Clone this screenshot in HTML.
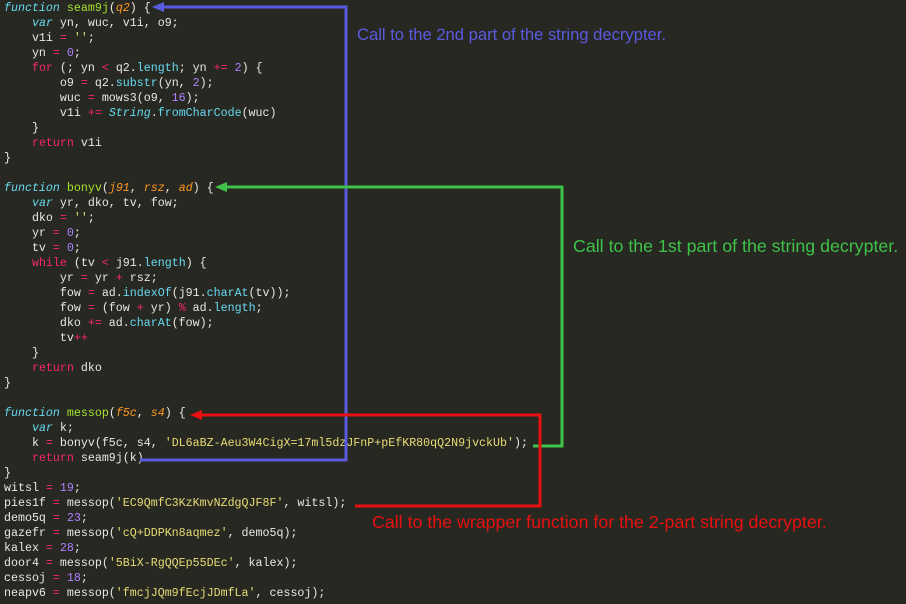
<!DOCTYPE html>
<html><head><meta charset="utf-8"><style>
html,body{margin:0;padding:0;background:#272822;width:906px;height:604px;overflow:hidden}
#code{position:absolute;left:4px;top:1px;font-family:"Liberation Mono",monospace;font-size:11.65px;line-height:15px;color:#e8e8e2;white-space:pre}
.k{color:#66d9ef;font-style:italic}
.f{color:#a6e22e}
.p{color:#fd971f;font-style:italic}
.o{color:#f92672}
.n{color:#ae81ff}
.s{color:#e6db74}
.m{color:#66d9ef}
.lbl{position:absolute;font-family:"Liberation Sans",Arial,sans-serif;font-size:17.8px;white-space:nowrap}
</style></head><body>
<div id="code"><span class="k">function</span> <span class="f">seam9j</span>(<span class="p">q2</span>) {
    <span class="k">var</span> yn, wuc, v1i, o9;
    v1i <span class="o">=</span> <span class="s">''</span>;
    yn <span class="o">=</span> <span class="n">0</span>;
    <span class="o">for</span> (; yn <span class="o">&lt;</span> q2.<span class="m">length</span>; yn <span class="o">+=</span> <span class="n">2</span>) {
        o9 <span class="o">=</span> q2.<span class="m">substr</span>(yn, <span class="n">2</span>);
        wuc <span class="o">=</span> mows3(o9, <span class="n">16</span>);
        v1i <span class="o">+=</span> <span class="k">String</span>.<span class="m">fromCharCode</span>(wuc)
    }
    <span class="o">return</span> v1i
}

<span class="k">function</span> <span class="f">bonyv</span>(<span class="p">j91</span>, <span class="p">rsz</span>, <span class="p">ad</span>) {
    <span class="k">var</span> yr, dko, tv, fow;
    dko <span class="o">=</span> <span class="s">''</span>;
    yr <span class="o">=</span> <span class="n">0</span>;
    tv <span class="o">=</span> <span class="n">0</span>;
    <span class="o">while</span> (tv <span class="o">&lt;</span> j91.<span class="m">length</span>) {
        yr <span class="o">=</span> yr <span class="o">+</span> rsz;
        fow <span class="o">=</span> ad.<span class="m">indexOf</span>(j91.<span class="m">charAt</span>(tv));
        fow <span class="o">=</span> (fow <span class="o">+</span> yr) <span class="o">%</span> ad.<span class="m">length</span>;
        dko <span class="o">+=</span> ad.<span class="m">charAt</span>(fow);
        tv<span class="o">++</span>
    }
    <span class="o">return</span> dko
}

<span class="k">function</span> <span class="f">messop</span>(<span class="p">f5c</span>, <span class="p">s4</span>) {
    <span class="k">var</span> k;
    k <span class="o">=</span> bonyv(f5c, s4, <span class="s">'DL6aBZ-Aeu3W4CigX=17ml5dzJFnP+pEfKR80qQ2N9jvckUb'</span>);
    <span class="o">return</span> seam9j(k)
}
witsl <span class="o">=</span> <span class="n">19</span>;
pies1f <span class="o">=</span> messop(<span class="s">'EC9QmfC3KzKmvNZdgQJF8F'</span>, witsl);
demo5q <span class="o">=</span> <span class="n">23</span>;
gazefr <span class="o">=</span> messop(<span class="s">'cQ+DDPKn8aqmez'</span>, demo5q);
kalex <span class="o">=</span> <span class="n">28</span>;
door4 <span class="o">=</span> messop(<span class="s">'5BiX-RgQQEp55DEc'</span>, kalex);
cessoj <span class="o">=</span> <span class="n">18</span>;
neapv6 <span class="o">=</span> messop(<span class="s">'fmcjJQm9fEcjJDmfLa'</span>, cessoj);</div>
<svg width="906" height="604" style="position:absolute;left:0;top:0">
<g fill="none" stroke-width="3">
<polyline points="162,7 346,7 346,460 140,460" stroke="#5a5ae0"/>
<polyline points="225,187 562,187 562,446 533,446" stroke="#3fc24a"/>
<polyline points="200,415 540,415 540,506 355,506" stroke="#e81010"/>
</g>
<polygon points="152,7 164,2 164,12" fill="#5a5ae0"/>
<polygon points="215,187 227,182 227,192" fill="#3fc24a"/>
<polygon points="190,415 202,410 202,420" fill="#e81010"/>
</svg>
<div class="lbl" style="left:357px;top:25px;color:#5a5ae0;font-size:16.6px">Call to the 2nd part of the string decrypter.</div>
<div class="lbl" style="left:573px;top:236px;color:#3fc24a">Call to the 1st part of the string decrypter.</div>
<div class="lbl" style="left:372px;top:512px;color:#e81010">Call to the wrapper function for the 2-part string decrypter.</div>
</body></html>
